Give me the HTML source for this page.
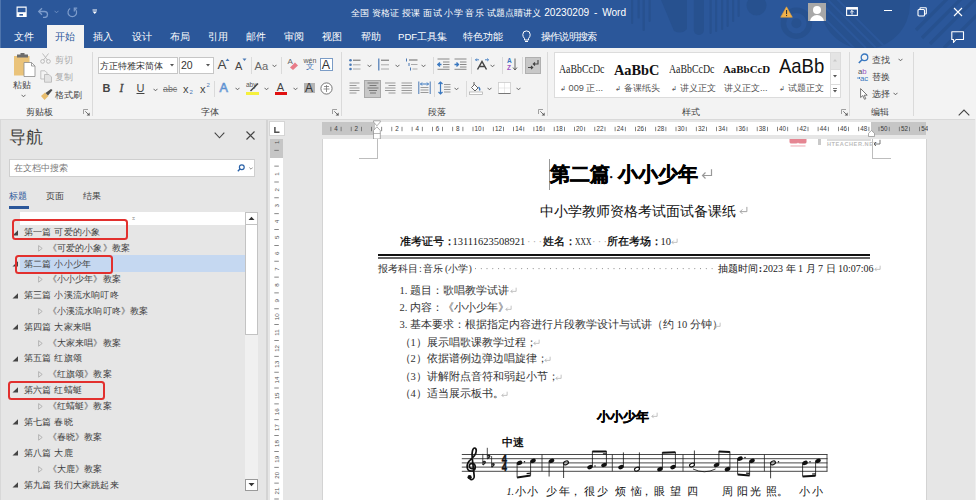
<!DOCTYPE html>
<html><head><meta charset="utf-8">
<style>
*{margin:0;padding:0;box-sizing:border-box}
html,body{width:976px;height:500px;overflow:hidden;background:#e6e6e6;font-family:"Liberation Sans",sans-serif;color:#444}
.a{position:absolute;white-space:nowrap}
#title{left:0;top:0;width:976px;height:48px;background:#2b579a;overflow:hidden}
#ribbon{left:0;top:48px;width:976px;height:72px;background:#f3f3f3;border-bottom:1px solid #d9d9d9}
#nav{left:0;top:120px;width:267px;height:380px;background:#e6e6e6;border-right:1px solid #d4d4d4}
.tab{top:30.5px;font-size:9.6px;line-height:12px;color:#fff}
.rl{font-size:10px;line-height:12px;color:#444}
.sep{position:absolute;width:1px;background:#dadada}
.ser{font-family:"Liberation Serif",serif;color:#000}
</style></head><body>
<div id="title" class="a">
<svg class="a" style="left:0;top:0" width="976" height="48">
 <defs><clipPath id="bc"><circle cx="865" cy="4" r="45"/></clipPath></defs>
 <g fill="#27518f">
  <rect x="631" y="-5" width="2.2" height="29" rx="1.1"/>
  <rect x="637.5" y="-5" width="2.2" height="23.5" rx="1.1"/>
  <rect x="642.5" y="-5" width="2.4" height="36" rx="1.2"/>
  <rect x="648.5" y="-5" width="2.2" height="27" rx="1.1"/>
  <path d="M661 0 H687 V29 Q682 35 674 31 Z"/>
  <rect x="693.8" y="-5" width="10.2" height="40" rx="5"/>
  <rect x="709.5" y="-5" width="2.2" height="39" rx="1.1"/>
  <rect x="715" y="-5" width="2.2" height="37" rx="1.1"/>
  <rect x="721" y="-5" width="2.2" height="35" rx="1.1"/>
  <rect x="726.5" y="-5" width="2.2" height="32" rx="1.1"/>
  <rect x="732" y="-5" width="2.2" height="27" rx="1.1"/>
  <rect x="737.5" y="-5" width="2.2" height="22" rx="1.1"/>
  <circle cx="756.5" cy="5.5" r="10"/>
  <circle cx="796.4" cy="23.2" r="5"/>
  <circle cx="865" cy="4" r="45"/>
 </g>
 <circle cx="796.4" cy="23.2" r="13" fill="none" stroke="#27518f" stroke-width="5.5"/>
 <g clip-path="url(#bc)" stroke="#2b579a" stroke-width="2">
  <path d="M820 2 L866 48 M828 0 L876 48 M836 -2 L886 48 M812 6 L854 48"/>
 </g>
 <g stroke="#27518f" stroke-width="3.2">
  <path d="M916 30 L976 -30 M922 38 L986 -26 M930 44 L990 -16 M944 48 L1000 -8"/>
 </g>
</svg>
<!-- save -->
<svg class="a" style="left:16px;top:6px" width="12" height="12" viewBox="0 0 12 12">
 <path d="M1.1 1.1 H10.1 V10.4 H1.1 Z" fill="none" stroke="#fff" stroke-width="1.1"/>
 <rect x="1.1" y="6.2" width="9" height="4.6" fill="#fff"/>
 <rect x="3.4" y="8" width="3.6" height="1.6" fill="#2b579a"/>
</svg>
<!-- undo -->
<svg class="a" style="left:37px;top:7px" width="13" height="11" viewBox="0 0 13 11">
 <path d="M2 4.5 H7.5 A3 3 0 0 1 7.5 10.5 H6" fill="none" stroke="#7d9ccb" stroke-width="1.3"/>
 <path d="M5 1.2 L1.7 4.5 L5 7.8" fill="none" stroke="#7d9ccb" stroke-width="1.3"/>
</svg>
<svg class="a" style="left:54px;top:10px" width="5" height="4"><path d="M0.5 0.8 L2.5 2.8 L4.5 0.8" fill="none" stroke="#7d9ccb" stroke-width="0.8"/></svg>
<!-- redo -->
<svg class="a" style="left:66px;top:6px" width="13" height="13" viewBox="0 0 13 13">
 <path d="M4.15 2.6 A4.3 4.3 0 1 0 8.45 2.6" fill="none" stroke="#7d9ccb" stroke-width="1.2"/>
 <path d="M8.3 5.4 V2.1 H11.2" fill="none" stroke="#7d9ccb" stroke-width="1.2"/>
</svg>
<!-- customize -->
<svg class="a" style="left:92px;top:9px" width="6" height="6" viewBox="0 0 6 6">
 <rect x="0.5" y="0.5" width="4.5" height="1" fill="#fff"/>
 <path d="M0.5 2.5 H5 L2.75 5 Z" fill="#fff"/>
</svg>
<div class="a" style="left:351px;top:7px;font-size:9.3px;line-height:12px;color:#fff;letter-spacing:0.16px">全国 资格证 授课 面试 小学 音乐 试题点睛讲义 <span style="font-size:10.1px;letter-spacing:0;word-spacing:2px">20230209 - Word</span></div>
<!-- warning -->
<svg class="a" style="left:780px;top:6px" width="13" height="12" viewBox="0 0 13 12">
 <path d="M6.5 0.8 L12.3 11.2 H0.7 Z" fill="#f0b14a" stroke="#e8a43c" stroke-width="0.6" stroke-linejoin="round"/>
 <rect x="6" y="4" width="1.1" height="4" fill="#333"/><rect x="6" y="8.9" width="1.1" height="1.2" fill="#333"/>
</svg>
<!-- avatar -->
<div class="a" style="left:808px;top:3px;width:18px;height:18px;background:#a8a8a8;overflow:hidden">
 <div class="a" style="left:5px;top:3px;width:8px;height:8px;border-radius:50%;background:#fff"></div>
 <div class="a" style="left:2px;top:11.5px;width:14px;height:10px;border-radius:7px 7px 0 0;background:#fff"></div>
</div>
<!-- ribbon display -->
<svg class="a" style="left:846px;top:7px" width="12" height="9" viewBox="0 0 12 9">
 <rect x="0.6" y="0.6" width="10.8" height="7.8" fill="none" stroke="#fff" stroke-width="1.1"/>
 <rect x="0.6" y="0.6" width="10.8" height="2" fill="#fff"/>
 <path d="M6 3.5 V7.5 M4.2 5.3 L6 3.5 L7.8 5.3" fill="none" stroke="#fff" stroke-width="1"/>
</svg>
<div class="a" style="left:884px;top:10px;width:8px;height:1px;background:#fff"></div>
<svg class="a" style="left:917px;top:7px" width="11" height="10" viewBox="0 0 11 10">
 <rect x="1" y="2.5" width="6.5" height="6.5" rx="1" fill="none" stroke="#fff" stroke-width="1.1"/>
 <path d="M3 2.5 V1.5 Q3 0.8 3.8 0.8 H8.5 Q9.3 0.8 9.3 1.6 V6.3 Q9.3 7 8.5 7 H7.5" fill="none" stroke="#fff" stroke-width="1.1"/>
</svg>
<svg class="a" style="left:953px;top:7px" width="10" height="10" viewBox="0 0 10 10">
 <path d="M1 1 L9 9 M9 1 L1 9" stroke="#fff" stroke-width="1.1"/>
</svg>
<svg class="a" style="left:951px;top:31px" width="14" height="13" viewBox="0 0 14 13">
 <path d="M0.8 0.8 H12.5 V8.5 H5 L2.5 11.5 V8.5 H0.8 Z" fill="none" stroke="#fff" stroke-width="1.1" stroke-linejoin="round"/>
</svg>
</div>
<div class="a" style="left:47px;top:25px;width:37px;height:23px;background:#f3f3f3"></div>
<div class="a tab" style="left:14px">文件</div>
<div class="a tab" style="left:55px;color:#2b579a">开始</div>
<div class="a tab" style="left:93px">插入</div>
<div class="a tab" style="left:132px">设计</div>
<div class="a tab" style="left:170px">布局</div>
<div class="a tab" style="left:208px">引用</div>
<div class="a tab" style="left:246px">邮件</div>
<div class="a tab" style="left:284px">审阅</div>
<div class="a tab" style="left:322px">视图</div>
<div class="a tab" style="left:361px">帮助</div>
<div class="a tab" style="left:398px">PDF工具集</div>
<div class="a tab" style="left:463px">特色功能</div>
<svg class="a" style="left:522px;top:30px" width="9" height="13" viewBox="0 0 9 13">
 <path d="M2.5 8.5 Q0.8 6.8 0.8 4.6 A3.7 3.7 0 0 1 8.2 4.6 Q8.2 6.8 6.5 8.5 V10 H2.5 Z" fill="none" stroke="#fff" stroke-width="1"/>
 <path d="M3 11.5 H6" stroke="#fff" stroke-width="1"/>
</svg>
<div class="a tab" style="left:541px;letter-spacing:-0.8px">操作说明搜索</div>
<div class="a" style="left:0;top:0;width:1px;height:48px;background:#4f75ad"></div>
<div id="ribbon" class="a"></div>
<!-- clipboard -->
<svg class="a" style="left:12px;top:53px" width="25" height="25" viewBox="0 0 25 25">
 <rect x="2" y="3" width="15.5" height="19.5" fill="#eac37a"/>
 <rect x="5" y="1.5" width="11" height="3" fill="#6d6d6d"/>
 <rect x="8.5" y="0" width="4" height="3" fill="#6d6d6d"/>
 <path d="M12 9.5 H19.5 L23 13 V23.5 H12 Z" fill="#fff" stroke="#8a8a8a" stroke-width="0.8"/>
 <path d="M19.5 9.5 V13 H23" fill="none" stroke="#8a8a8a" stroke-width="0.8"/>
</svg>
<div class="a rl" style="left:12.5px;top:78.5px;font-size:9.3px">粘贴</div>
<svg class="a" style="left:21px;top:94px" width="5" height="4"><path d="M0.5 0.8 L2.5 2.8 L4.5 0.8" fill="none" stroke="#555" stroke-width="0.9"/></svg>
<svg class="a" style="left:40px;top:53px" width="11" height="11" viewBox="0 0 11 11">
 <path d="M2.5 0.5 L7.5 7 M8.5 0.5 L3.5 7" stroke="#b5b5b5" stroke-width="0.9" fill="none"/>
 <circle cx="2.6" cy="8.4" r="1.9" fill="none" stroke="#b5b5b5" stroke-width="0.9"/>
 <circle cx="8.4" cy="8.4" r="1.9" fill="none" stroke="#b5b5b5" stroke-width="0.9"/>
</svg>
<div class="a rl" style="left:54.5px;top:53.5px;color:#aaa;font-size:9.2px">剪切</div>
<svg class="a" style="left:40px;top:70px" width="13" height="13" viewBox="0 0 13 13">
 <path d="M0.8 0.8 H5 L7 2.8 V9 H0.8 Z" fill="#f3f3f3" stroke="#b5b5b5" stroke-width="0.8"/>
 <path d="M4.5 4.5 H9 L11.5 7 V12.2 H4.5 Z" fill="#e3e3e3" stroke="#b5b5b5" stroke-width="0.8"/>
</svg>
<div class="a rl" style="left:54.5px;top:71px;color:#aaa;font-size:9.2px">复制</div>
<svg class="a" style="left:40px;top:89px" width="13" height="12" viewBox="0 0 13 12">
 <path d="M1 7 L5 3.5 L8.5 7 L4.5 11 Z" fill="#e8bd6d"/>
 <path d="M5.5 4 L8 6.5 L12.5 1 L11 0 Z" fill="#4d4d4d"/>
</svg>
<div class="a rl" style="left:54.5px;top:89px;font-size:9.2px">格式刷</div>
<div class="a rl" style="left:26px;top:105.5px;font-size:9.2px">剪贴板</div>
<svg class="a" style="left:83px;top:109px" width="7" height="7" viewBox="0 0 7 7"><path d="M0.5 5 V0.5 H5" fill="none" stroke="#8a8a8a" stroke-width="0.8"/><path d="M2.3 2.3 L6.3 6.3" stroke="#666" stroke-width="0.9"/><path d="M6.6 3.6 V6.6 H3.6 Z" fill="#555"/></svg>
<div class="sep" style="left:92px;top:52px;height:64px"></div>

<!-- font -->
<div class="a" style="left:98px;top:56.5px;width:79.5px;height:17.5px;background:#fff;border:1px solid #c6c6c6"></div>
<div class="a rl" style="left:100px;top:59.5px;font-size:9.2px;color:#333">方正特雅宋简体</div>
<svg class="a" style="left:169.5px;top:64px" width="5" height="3"><path d="M0 0 H4 L2 2.5 Z" fill="#555"/></svg>
<div class="a" style="left:179px;top:56.5px;width:35px;height:17.5px;background:#fff;border:1px solid #c6c6c6"></div>
<div class="a rl" style="left:181px;top:58.5px;font-size:10.5px;color:#333">20</div>
<svg class="a" style="left:205.5px;top:64px" width="5" height="3"><path d="M0 0 H4 L2 2.5 Z" fill="#555"/></svg>
<div class="a" style="left:217.5px;top:57.2px;font-size:13.5px;line-height:16px;color:#444">A</div>
<svg class="a" style="left:225px;top:58px" width="5" height="4"><path d="M0.5 3 L2.5 0.5 L4.5 3 Z" fill="#4a79b5"/></svg>
<div class="a" style="left:235px;top:60.2px;font-size:11px;line-height:13px;color:#444">A</div>
<svg class="a" style="left:241.5px;top:58px" width="5" height="4"><path d="M0.5 0.5 L2.5 3 L4.5 0.5 Z" fill="#4a79b5"/></svg>
<div class="sep" style="left:250.5px;top:57px;height:17px"></div>
<div class="a" style="left:254.5px;top:59.2px;font-size:11.2px;line-height:14px;color:#666">Aa</div>
<svg class="a" style="left:271.5px;top:64px" width="5" height="4"><path d="M0.5 0.8 L2.5 2.8 L4.5 0.8" fill="none" stroke="#555" stroke-width="0.9"/></svg>
<div class="sep" style="left:281px;top:57px;height:17px"></div>
<div class="a" style="left:287.5px;top:57px;font-size:8px;line-height:9px;color:#666">A</div>
<svg class="a" style="left:289px;top:61px" width="10" height="9" viewBox="0 0 10 9"><path d="M1 6.5 L6 1.5 L9 4.5 L4 9 Z" fill="#e87b88"/></svg>
<div class="a" style="left:303.5px;top:57px;font-size:7px;line-height:8px;color:#555">wén</div>
<div class="a" style="left:305.5px;top:63px;font-size:8px;line-height:8px;color:#4a79b5">文</div>
<div class="a" style="left:320px;top:58px;width:13px;height:13px;border:1px solid #7b9cc6;background:#fff"></div>
<div class="a" style="left:321.8px;top:57.5px;font-size:12.5px;line-height:14px;color:#333">A</div>
<div class="sep" style="left:340.5px;top:52px;height:64px"></div>
<!-- row2 -->
<div class="a" style="left:102.5px;top:82px;font-size:11px;line-height:13px;font-weight:bold;color:#444">B</div>
<div class="a" style="left:119.5px;top:82px;font-size:11.5px;line-height:13px;font-style:italic;color:#444;font-family:'Liberation Serif',serif;-webkit-text-stroke:0.3px #444">I</div>
<div class="a" style="left:136.5px;top:82px;font-size:11px;line-height:13px;color:#444;text-decoration:underline">U</div>
<svg class="a" style="left:152.5px;top:88px" width="5" height="4"><path d="M0.5 0.8 L2.5 2.8 L4.5 0.8" fill="none" stroke="#555" stroke-width="0.9"/></svg>
<div class="a" style="left:163px;top:83.5px;font-size:8.8px;line-height:11px;color:#777;text-decoration:line-through">abc</div>
<div class="a" style="left:183px;top:82.5px;font-size:11px;line-height:13px;color:#444">x</div>
<div class="a" style="left:189.5px;top:89px;font-size:6px;line-height:6px;color:#4a79b5">2</div>
<div class="a" style="left:200px;top:82.5px;font-size:11px;line-height:13px;color:#444">x</div>
<div class="a" style="left:206.5px;top:82px;font-size:6px;line-height:6px;color:#4a79b5">2</div>
<div class="sep" style="left:214px;top:81px;height:16px"></div>
<div class="a" style="left:219.5px;top:80.5px;font-size:12.5px;line-height:14px;color:#eef4fb;-webkit-text-stroke:0.7px #5a8fd0">A</div>
<svg class="a" style="left:234.5px;top:87px" width="5" height="4"><path d="M0.5 0.8 L2.5 2.8 L4.5 0.8" fill="none" stroke="#555" stroke-width="0.9"/></svg>
<div class="a" style="left:246px;top:81px;font-size:6.5px;line-height:7px;color:#555">aby</div>
<svg class="a" style="left:248px;top:82px" width="11" height="10" viewBox="0 0 11 10"><path d="M2 8.5 L9.5 1 L10.5 2 L3 9.5 Z" fill="#444"/></svg>
<div class="a" style="left:246px;top:91.5px;width:12.5px;height:3px;background:#f5f03c"></div>
<svg class="a" style="left:264px;top:87px" width="5" height="4"><path d="M0.5 0.8 L2.5 2.8 L4.5 0.8" fill="none" stroke="#555" stroke-width="0.9"/></svg>
<div class="a" style="left:276.8px;top:80.5px;font-size:11px;line-height:13px;color:#444">A</div>
<div class="a" style="left:274.5px;top:91.5px;width:12.5px;height:3px;background:#e01010"></div>
<svg class="a" style="left:292.5px;top:87px" width="5" height="4"><path d="M0.5 0.8 L2.5 2.8 L4.5 0.8" fill="none" stroke="#555" stroke-width="0.9"/></svg>
<div class="a" style="left:304px;top:83px;width:10.5px;height:10px;background:#b4b4b4"></div>
<div class="a" style="left:305px;top:81.5px;font-size:12px;line-height:13px;color:#333">A</div>
<svg class="a" style="left:320px;top:82px" width="13" height="13" viewBox="0 0 13 13"><circle cx="6.5" cy="6.5" r="5.6" fill="#fff" stroke="#666" stroke-width="0.9"/><path d="M4 4.5 H9 M6.5 3 V10 M3.5 7 H9.5" stroke="#777" stroke-width="0.8" fill="none"/></svg>
<div class="a rl" style="left:201px;top:105.5px;font-size:9.2px">字体</div>
<svg class="a" style="left:332px;top:109px" width="7" height="7" viewBox="0 0 7 7"><path d="M0.5 5 V0.5 H5" fill="none" stroke="#8a8a8a" stroke-width="0.8"/><path d="M2.3 2.3 L6.3 6.3" stroke="#666" stroke-width="0.9"/><path d="M6.6 3.6 V6.6 H3.6 Z" fill="#555"/></svg>

<!-- paragraph -->
<svg class="a" style="left:348px;top:58px" width="14" height="13" viewBox="0 0 14 13">
 <circle cx="2.5" cy="2.2" r="1.3" fill="#4a79b5"/><circle cx="2.5" cy="6.8" r="1.3" fill="#4a79b5"/><circle cx="2.5" cy="11" r="1.3" fill="#4a79b5"/>
 <path d="M5 2.2 H12.5" stroke="#666" stroke-width="1"/><path d="M5 6.8 H12.5 M5 11 H12.5" stroke="#aaa" stroke-width="1"/>
</svg>
<svg class="a" style="left:366.5px;top:64px" width="5" height="4"><path d="M0.5 0.8 L2.5 2.8 L4.5 0.8" fill="none" stroke="#555" stroke-width="0.9"/></svg>
<svg class="a" style="left:377px;top:58px" width="14" height="13" viewBox="0 0 14 13">
 <path d="M1.8 0.5 V12.5" stroke="#4a79b5" stroke-width="1.2"/>
 <path d="M4 2.2 H12" stroke="#666" stroke-width="1"/><path d="M4 6.8 H12 M4 11 H12" stroke="#aaa" stroke-width="1"/>
</svg>
<svg class="a" style="left:394.5px;top:64px" width="5" height="4"><path d="M0.5 0.8 L2.5 2.8 L4.5 0.8" fill="none" stroke="#555" stroke-width="0.9"/></svg>
<svg class="a" style="left:405px;top:58px" width="14" height="13" viewBox="0 0 14 13">
 <path d="M1.5 0.5 V3.5 M4 5 V8 M5.5 9.5 V12.5" stroke="#4a79b5" stroke-width="1"/>
 <path d="M4 2 H12.5" stroke="#666" stroke-width="1"/><path d="M6 6.5 H12.5 M7.5 11 H12.5" stroke="#aaa" stroke-width="1"/>
</svg>
<svg class="a" style="left:421px;top:64px" width="5" height="4"><path d="M0.5 0.8 L2.5 2.8 L4.5 0.8" fill="none" stroke="#555" stroke-width="0.9"/></svg>
<div class="sep" style="left:432.5px;top:57px;height:17px"></div>
<svg class="a" style="left:436.5px;top:58px" width="13" height="12" viewBox="0 0 13 12">
 <path d="M0.5 1 H12.5 M6 4 H12.5 M6 6.5 H12.5 M6 9 H12.5 M0.5 11.3 H12.5" stroke="#888" stroke-width="1"/>
 <path d="M4.5 6.5 H0.8 M3 4.5 L0.8 6.5 L3 8.5" stroke="#3a78c0" stroke-width="1.3" fill="none"/>
</svg>
<svg class="a" style="left:453.5px;top:58px" width="13" height="12" viewBox="0 0 13 12">
 <path d="M0.5 1 H12.5 M6 4 H12.5 M6 6.5 H12.5 M6 9 H12.5 M0.5 11.3 H12.5" stroke="#888" stroke-width="1"/>
 <path d="M0.5 6.5 H4.5 M2.5 4.5 L4.5 6.5 L2.5 8.5" stroke="#3a78c0" stroke-width="1.3" fill="none"/>
</svg>
<div class="sep" style="left:470.5px;top:57px;height:17px"></div>
<svg class="a" style="left:474.5px;top:58px" width="14" height="12" viewBox="0 0 14 12">
 <path d="M2.5 11.5 L7 3.5 L11.5 11.5 M4.2 8.5 H9.8" stroke="#444" stroke-width="1.5" fill="none"/>
 <path d="M0.5 1.8 H4 M1.8 0.5 L0.5 1.8 L1.8 3.1 M13.5 1.8 H10 M12.2 0.5 L13.5 1.8 L12.2 3.1" stroke="#3a78c0" stroke-width="0.9" fill="none"/>
</svg>
<svg class="a" style="left:490px;top:64px" width="5" height="4"><path d="M0.5 0.8 L2.5 2.8 L4.5 0.8" fill="none" stroke="#555" stroke-width="0.9"/></svg>
<div class="sep" style="left:501.5px;top:57px;height:17px"></div>
<div class="a" style="left:507px;top:57px;font-size:6.5px;line-height:7px;color:#3a78c0;font-weight:bold">A</div>
<div class="a" style="left:507px;top:63.5px;font-size:6.5px;line-height:7px;color:#9b4fc2;font-weight:bold">Z</div>
<svg class="a" style="left:512px;top:58px" width="6" height="13" viewBox="0 0 6 13"><path d="M3 0.5 V12 M1 9.5 L3 12 L5 9.5" stroke="#555" stroke-width="0.9" fill="none"/></svg>
<div class="sep" style="left:522.3px;top:57px;height:17px"></div>
<div class="a" style="left:524.5px;top:57px;width:16.5px;height:17px;background:#c8c8c8;border:1px solid #b0b0b0"></div>
<svg class="a" style="left:526.5px;top:59px" width="13" height="13" viewBox="0 0 13 13">
 <path d="M11 1 V5 H6.5 M8 3.5 L6.3 5 L8 6.5" stroke="#444" stroke-width="1.1" fill="none"/>
 <path d="M1 8.5 H5.5 M4 7 L5.7 8.5 L4 10" stroke="#444" stroke-width="1.1" fill="none"/>
</svg>
<!-- row2 para -->
<svg class="a" style="left:349px;top:82px" width="12" height="12" viewBox="0 0 12 12">
 <path d="M0.5 1 H10.5 M0.5 3.5 H7.5 M0.5 6 H10.5 M0.5 8.5 H10.5 M0.5 11 H7.5" stroke="#999" stroke-width="1"/>
</svg>
<div class="a" style="left:364px;top:80px;width:16.5px;height:17.5px;background:#c8c8c8;border:1px solid #a9a9a9"></div>
<svg class="a" style="left:366.5px;top:82px" width="12" height="12" viewBox="0 0 12 12">
 <path d="M0.5 1 H11.5 M2.5 3.5 H9.5 M0.5 6 H11.5 M2 8.5 H10 M3 11 H9" stroke="#777" stroke-width="1"/>
</svg>
<svg class="a" style="left:383.5px;top:82px" width="12" height="12" viewBox="0 0 12 12">
 <path d="M1 1 H11.5 M4.5 3.5 H11.5 M1 6 H11.5 M1 8.5 H11.5 M4.5 11 H11.5" stroke="#999" stroke-width="1"/>
</svg>
<svg class="a" style="left:401px;top:82px" width="12" height="12" viewBox="0 0 12 12">
 <path d="M0.5 1 H11 M0.5 3.5 H11 M0.5 6 H11 M0.5 8.5 H11 M0.5 11 H11" stroke="#999" stroke-width="1"/>
</svg>
<svg class="a" style="left:417.5px;top:81px" width="13" height="14" viewBox="0 0 13 14">
 <path d="M0.8 0.5 V13 M12.2 0.5 V13" stroke="#4a79b5" stroke-width="1"/>
 <path d="M2.5 3 H10.5 M4 1.5 L2.5 3 L4 4.5 M9 1.5 L10.5 3 L9 4.5" stroke="#3a78c0" stroke-width="1" fill="none"/>
 <path d="M2.5 6.5 H10.5 M2.5 9 H10.5 M2.5 11.5 H10.5" stroke="#999" stroke-width="1"/>
</svg>
<div class="sep" style="left:434px;top:81px;height:16px"></div>
<svg class="a" style="left:438px;top:81px" width="13" height="14" viewBox="0 0 13 14">
 <path d="M2.5 1 V13 M0.5 3 L2.5 1 L4.5 3 M0.5 11 L2.5 13 L4.5 11" stroke="#3a78c0" stroke-width="1.2" fill="none"/>
 <path d="M6 3.5 H12.5 M6 6 H12.5 M6 8.5 H12.5 M6 11 H12.5" stroke="#999" stroke-width="1"/>
</svg>
<svg class="a" style="left:454px;top:87px" width="5" height="4"><path d="M0.5 0.8 L2.5 2.8 L4.5 0.8" fill="none" stroke="#555" stroke-width="0.9"/></svg>
<div class="sep" style="left:465.5px;top:81px;height:16px"></div>
<svg class="a" style="left:469px;top:81px" width="14" height="14" viewBox="0 0 14 14">
 <path d="M5 1 V4 M2.5 6.5 L5.5 3.5 L9 7 L6 10 Z" stroke="#555" stroke-width="0.9" fill="#fff"/>
 <path d="M9.5 6 Q11.5 8 10.5 9.5" stroke="#3a78c0" stroke-width="1.3" fill="none"/>
 <rect x="0.5" y="11" width="13" height="2.5" fill="#fff" stroke="#aaa" stroke-width="0.7"/>
</svg>
<svg class="a" style="left:487px;top:87px" width="5" height="4"><path d="M0.5 0.8 L2.5 2.8 L4.5 0.8" fill="none" stroke="#555" stroke-width="0.9"/></svg>
<svg class="a" style="left:497.5px;top:82px" width="13" height="12" viewBox="0 0 13 12">
 <rect x="0.5" y="0.5" width="12" height="11" fill="#fff" stroke="#ccc" stroke-width="0.8"/>
 <path d="M6.5 0.5 V11.5 M0.5 6 H12.5" stroke="#ccc" stroke-width="0.8" stroke-dasharray="1 1"/>
 <path d="M0.5 11.5 H12.5" stroke="#777" stroke-width="1"/>
</svg>
<svg class="a" style="left:515.5px;top:87px" width="5" height="4"><path d="M0.5 0.8 L2.5 2.8 L4.5 0.8" fill="none" stroke="#555" stroke-width="0.9"/></svg>
<div class="a rl" style="left:428px;top:105.5px;font-size:9.2px">段落</div>
<svg class="a" style="left:538px;top:109px" width="7" height="7" viewBox="0 0 7 7"><path d="M0.5 5 V0.5 H5" fill="none" stroke="#8a8a8a" stroke-width="0.8"/><path d="M2.3 2.3 L6.3 6.3" stroke="#666" stroke-width="0.9"/><path d="M6.6 3.6 V6.6 H3.6 Z" fill="#555"/></svg>
<div class="sep" style="left:546.5px;top:52px;height:64px"></div>

<!-- styles -->
<div class="a" style="left:553.5px;top:52.3px;width:287.5px;height:46px;background:#fff;border:1px solid #dcdcdc"></div>
<div class="a" style="left:559px;top:62px;width:46px;overflow:hidden;font-family:'Liberation Serif',serif;font-size:12px;line-height:14px;color:#222"><span style="display:inline-block;transform:scaleX(0.82);transform-origin:0 0">AaBbCcDc</span></div>
<div class="a" style="left:560px;top:81.5px;font-size:9.2px;line-height:12px;color:#555"><span style="font-size:7px">↲</span> 009 正...</div>
<div class="a" style="left:614px;top:61.5px;font-family:'Liberation Serif',serif;font-size:14.3px;line-height:17px;font-weight:bold;color:#111">AaBbC</div>
<div class="a" style="left:615px;top:81.5px;font-size:9.2px;line-height:12px;color:#555"><span style="font-size:7px">↲</span> 备课纸头</div>
<div class="a" style="left:668.5px;top:62px;width:46px;overflow:hidden;font-family:'Liberation Serif',serif;font-size:12px;line-height:14px;color:#222"><span style="display:inline-block;transform:scaleX(0.82);transform-origin:0 0">AaBbCcDc</span></div>
<div class="a" style="left:671px;top:81.5px;font-size:9.2px;line-height:12px;color:#555"><span style="font-size:7px">↲</span> 讲义正文</div>
<div class="a" style="left:723px;top:63.2px;font-family:'Liberation Serif',serif;font-size:10.9px;line-height:13px;font-weight:bold;color:#111">AaBbCcD</div>
<div class="a" style="left:724px;top:81.5px;font-size:9.2px;line-height:12px;color:#555">讲义正文...</div>
<div class="a" style="left:778.5px;top:54.3px;font-size:21px;line-height:24px;color:#111;transform:scaleX(0.88);transform-origin:0 0">AaBb</div>
<div class="a" style="left:779px;top:81.5px;font-size:9.2px;line-height:12px;color:#555"><span style="font-size:7px">↲</span> 试题正文</div>
<div class="a" style="left:829.5px;top:52.3px;width:11.5px;height:46px;background:#fff;border:1px solid #dcdcdc"></div>
<div class="a" style="left:830.5px;top:53.3px;width:9.5px;height:15.5px;background:#e4e4e4"></div>
<div class="a" style="left:829.5px;top:68.5px;width:11.5px;height:1px;background:#dcdcdc"></div>
<div class="a" style="left:829.5px;top:83.5px;width:11.5px;height:1px;background:#dcdcdc"></div>
<svg class="a" style="left:833px;top:59px" width="5" height="3"><path d="M0 2.5 H4 L2 0 Z" fill="#c8c8c8"/></svg>
<svg class="a" style="left:833px;top:75px" width="5" height="3"><path d="M0 0 H4 L2 2.5 Z" fill="#555"/></svg>
<svg class="a" style="left:833px;top:88px" width="5" height="5"><path d="M0 0.5 H4" stroke="#555" stroke-width="0.8"/><path d="M0 2 H4 L2 4.5 Z" fill="#555"/></svg>
<div class="a rl" style="left:682px;top:105.5px;font-size:9.2px">样式</div>
<svg class="a" style="left:840.5px;top:109px" width="7" height="7" viewBox="0 0 7 7"><path d="M0.5 5 V0.5 H5" fill="none" stroke="#8a8a8a" stroke-width="0.8"/><path d="M2.3 2.3 L6.3 6.3" stroke="#666" stroke-width="0.9"/><path d="M6.6 3.6 V6.6 H3.6 Z" fill="#555"/></svg>
<div class="sep" style="left:848.5px;top:52px;height:64px"></div>

<!-- editing -->
<svg class="a" style="left:858px;top:53px" width="11" height="11" viewBox="0 0 11 11">
 <circle cx="6.5" cy="4.3" r="3.3" fill="none" stroke="#3a78c0" stroke-width="1.3"/>
 <path d="M4 6.8 L0.8 10" stroke="#3a78c0" stroke-width="1.6"/>
</svg>
<div class="a rl" style="left:871.5px;top:53.5px;font-size:9.2px">查找</div>
<svg class="a" style="left:898px;top:58px" width="5" height="4"><path d="M0.5 0.8 L2.5 2.8 L4.5 0.8" fill="none" stroke="#555" stroke-width="0.9"/></svg>
<div class="a" style="left:858px;top:68px;font-size:7.8px;line-height:7px;color:#555">a<span style="color:#9b4fc2">b</span></div>
<div class="a" style="left:860px;top:74.5px;font-size:7.8px;line-height:7px;color:#3a78c0">ac</div>
<svg class="a" style="left:857px;top:76px" width="4" height="4"><path d="M0 2 H3 M2 1 L3 2 L2 3" stroke="#3a78c0" stroke-width="0.8" fill="none"/></svg>
<div class="a rl" style="left:871.5px;top:71px;font-size:9.2px">替换</div>
<svg class="a" style="left:859.5px;top:87.5px" width="8" height="12" viewBox="0 0 8 12">
 <path d="M0.6 0.6 V9.5 L2.8 7.6 L4.5 11.3 L5.8 10.7 L4.2 7.2 H7.2 Z" fill="#fff" stroke="#555" stroke-width="0.8" stroke-linejoin="round"/>
</svg>
<div class="a rl" style="left:871.5px;top:88px;font-size:9.2px">选择</div>
<svg class="a" style="left:893px;top:92px" width="5" height="4"><path d="M0.5 0.8 L2.5 2.8 L4.5 0.8" fill="none" stroke="#555" stroke-width="0.9"/></svg>
<div class="a rl" style="left:871px;top:105.5px;font-size:9.2px">编辑</div>
<div class="sep" style="left:912.5px;top:52px;height:64px"></div>
<svg class="a" style="left:958px;top:109px" width="12" height="7" viewBox="0 0 12 7"><path d="M0.7 6.3 L6 1 L11.3 6.3" fill="none" stroke="#444" stroke-width="1.1"/></svg>
<div id="nav" class="a"></div>
<div class="a" style="left:8.5px;top:126.5px;font-size:16.5px;line-height:20px;color:#444">导航</div>
<svg class="a" style="left:214px;top:132px" width="11" height="7" viewBox="0 0 11 7"><path d="M0.7 0.7 L5.5 5.8 L10.3 0.7" fill="none" stroke="#444" stroke-width="1.1"/></svg>
<svg class="a" style="left:246px;top:131px" width="9" height="9" viewBox="0 0 9 9"><path d="M0.5 0.5 L8.5 8.5 M8.5 0.5 L0.5 8.5" stroke="#444" stroke-width="1.1"/></svg>
<div class="a" style="left:9px;top:158.5px;width:246px;height:18px;background:#fff;border:1px solid #cfcfcf"></div>
<div class="a" style="left:13.5px;top:161.5px;font-size:9.2px;line-height:12px;color:#7a7a7a">在文档中搜索</div>
<svg class="a" style="left:236.5px;top:163.5px" width="8" height="8" viewBox="0 0 8 8"><circle cx="4.8" cy="3.2" r="2.4" fill="none" stroke="#2b62a8" stroke-width="1.2"/><path d="M3 5 L0.8 7.2" stroke="#2b62a8" stroke-width="1.4"/></svg>
<svg class="a" style="left:249px;top:167px" width="4" height="3"><path d="M0.3 0.5 L2 2.2 L3.7 0.5" fill="none" stroke="#666" stroke-width="0.7"/></svg>
<div class="a" style="left:9px;top:189.5px;font-size:9.2px;line-height:12px;color:#2b579a">标题</div>
<div class="a" style="left:45.5px;top:189.5px;font-size:9.2px;line-height:12px;color:#444">页面</div>
<div class="a" style="left:82.5px;top:189.5px;font-size:9.2px;line-height:12px;color:#444">结果</div>
<div class="a" style="left:9px;top:206px;width:19.5px;height:2.5px;background:#2b579a"></div>
<div class="a" style="left:20px;top:212px;width:225px;height:12.5px;background:#fff"></div>
<div class="a" style="left:131px;top:215px;font-size:6px;line-height:6px;color:#777">⌅</div>
<div class="a" style="left:245px;top:212px;width:13px;height:12.5px;background:#fff;border:1px solid #c3c3c3"></div>
<svg class="a" style="left:248px;top:216px" width="7" height="5"><path d="M0.5 4 H6.5 L3.5 0.8 Z" fill="#333"/></svg>
<div class="a" style="left:245px;top:224px;width:13px;height:111px;background:#fff;border:1px solid #c3c3c3"></div>
<div class="a" style="left:245px;top:335px;width:13px;height:143.5px;background:#f0f0f0"></div>
<div class="a" style="left:245px;top:478.5px;width:13px;height:12px;background:#fff;border:1px solid #9a9a9a"></div>
<svg class="a" style="left:248px;top:482px" width="7" height="5"><path d="M0.5 1 H6.5 L3.5 4.2 Z" fill="#333"/></svg>
<div class="a" style="left:20px;top:255px;width:225px;height:17px;background:#c5d8f1"></div>
<svg class="a" style="left:12px;top:229.5px" width="7" height="6"><path d="M6 0.3 V5.6 H0.5 Z" fill="#444"/></svg>
<div class="a" style="left:24px;top:226.1px;font-size:9.2px;line-height:12px;color:#404040;font-weight:500;letter-spacing:0.2px">第一篇 可爱的小象</div>
<svg class="a" style="left:37.5px;top:244.9px" width="5" height="7"><path d="M0.6 0.6 L4.2 3.4 L0.6 6.2 Z" fill="none" stroke="#a0a0a0" stroke-width="0.7"/></svg>
<div class="a" style="left:47.5px;top:241.9px;font-size:9.2px;line-height:12px;color:#404040;font-weight:500;letter-spacing:0.2px">《可爱的小象》教案</div>
<svg class="a" style="left:12px;top:261.1px" width="7" height="6"><path d="M6 0.3 V5.6 H0.5 Z" fill="#444"/></svg>
<div class="a" style="left:24px;top:257.7px;font-size:9.2px;line-height:12px;color:#404040;font-weight:500;letter-spacing:0.2px">第二篇 小小少年</div>
<svg class="a" style="left:37.5px;top:276.4px" width="5" height="7"><path d="M0.6 0.6 L4.2 3.4 L0.6 6.2 Z" fill="none" stroke="#a0a0a0" stroke-width="0.7"/></svg>
<div class="a" style="left:47.5px;top:273.4px;font-size:9.2px;line-height:12px;color:#404040;font-weight:500;letter-spacing:0.2px">《小小少年》教案</div>
<svg class="a" style="left:12px;top:292.6px" width="7" height="6"><path d="M6 0.3 V5.6 H0.5 Z" fill="#444"/></svg>
<div class="a" style="left:24px;top:289.2px;font-size:9.2px;line-height:12px;color:#404040;font-weight:500;letter-spacing:0.2px">第三篇 小溪流水响叮咚</div>
<svg class="a" style="left:37.5px;top:308.0px" width="5" height="7"><path d="M0.6 0.6 L4.2 3.4 L0.6 6.2 Z" fill="none" stroke="#a0a0a0" stroke-width="0.7"/></svg>
<div class="a" style="left:47.5px;top:305.0px;font-size:9.2px;line-height:12px;color:#404040;font-weight:500;letter-spacing:0.2px">《小溪流水响叮咚》教案</div>
<svg class="a" style="left:12px;top:324.2px" width="7" height="6"><path d="M6 0.3 V5.6 H0.5 Z" fill="#444"/></svg>
<div class="a" style="left:24px;top:320.8px;font-size:9.2px;line-height:12px;color:#404040;font-weight:500;letter-spacing:0.2px">第四篇 大家来唱</div>
<svg class="a" style="left:37.5px;top:339.6px" width="5" height="7"><path d="M0.6 0.6 L4.2 3.4 L0.6 6.2 Z" fill="none" stroke="#a0a0a0" stroke-width="0.7"/></svg>
<div class="a" style="left:47.5px;top:336.6px;font-size:9.2px;line-height:12px;color:#404040;font-weight:500;letter-spacing:0.2px">《大家来唱》教案</div>
<svg class="a" style="left:12px;top:355.7px" width="7" height="6"><path d="M6 0.3 V5.6 H0.5 Z" fill="#444"/></svg>
<div class="a" style="left:24px;top:352.3px;font-size:9.2px;line-height:12px;color:#404040;font-weight:500;letter-spacing:0.2px">第五篇 红旗颂</div>
<svg class="a" style="left:37.5px;top:371.1px" width="5" height="7"><path d="M0.6 0.6 L4.2 3.4 L0.6 6.2 Z" fill="none" stroke="#a0a0a0" stroke-width="0.7"/></svg>
<div class="a" style="left:47.5px;top:368.1px;font-size:9.2px;line-height:12px;color:#404040;font-weight:500;letter-spacing:0.2px">《红旗颂》教案</div>
<svg class="a" style="left:12px;top:387.3px" width="7" height="6"><path d="M6 0.3 V5.6 H0.5 Z" fill="#444"/></svg>
<div class="a" style="left:24px;top:383.9px;font-size:9.2px;line-height:12px;color:#404040;font-weight:500;letter-spacing:0.2px">第六篇 红蜻蜓</div>
<svg class="a" style="left:37.5px;top:402.7px" width="5" height="7"><path d="M0.6 0.6 L4.2 3.4 L0.6 6.2 Z" fill="none" stroke="#a0a0a0" stroke-width="0.7"/></svg>
<div class="a" style="left:47.5px;top:399.7px;font-size:9.2px;line-height:12px;color:#404040;font-weight:500;letter-spacing:0.2px">《红蜻蜓》教案</div>
<svg class="a" style="left:12px;top:418.9px" width="7" height="6"><path d="M6 0.3 V5.6 H0.5 Z" fill="#444"/></svg>
<div class="a" style="left:24px;top:415.5px;font-size:9.2px;line-height:12px;color:#404040;font-weight:500;letter-spacing:0.2px">第七篇 春晓</div>
<svg class="a" style="left:37.5px;top:434.2px" width="5" height="7"><path d="M0.6 0.6 L4.2 3.4 L0.6 6.2 Z" fill="none" stroke="#a0a0a0" stroke-width="0.7"/></svg>
<div class="a" style="left:47.5px;top:431.2px;font-size:9.2px;line-height:12px;color:#404040;font-weight:500;letter-spacing:0.2px">《春晓》教案</div>
<svg class="a" style="left:12px;top:450.4px" width="7" height="6"><path d="M6 0.3 V5.6 H0.5 Z" fill="#444"/></svg>
<div class="a" style="left:24px;top:447.0px;font-size:9.2px;line-height:12px;color:#404040;font-weight:500;letter-spacing:0.2px">第八篇 大鹿</div>
<svg class="a" style="left:37.5px;top:465.8px" width="5" height="7"><path d="M0.6 0.6 L4.2 3.4 L0.6 6.2 Z" fill="none" stroke="#a0a0a0" stroke-width="0.7"/></svg>
<div class="a" style="left:47.5px;top:462.8px;font-size:9.2px;line-height:12px;color:#404040;font-weight:500;letter-spacing:0.2px">《大鹿》教案</div>
<svg class="a" style="left:12px;top:482.0px" width="7" height="6"><path d="M6 0.3 V5.6 H0.5 Z" fill="#444"/></svg>
<div class="a" style="left:24px;top:478.6px;font-size:9.2px;line-height:12px;color:#404040;font-weight:500;letter-spacing:0.2px">第九篇 我们大家跳起来</div>
<div class="a" style="left:12.2px;top:219.3px;width:115.5px;height:20.9px;border:2.4px solid #e2302e;border-radius:3.5px"></div>
<div class="a" style="left:14.8px;top:254.5px;width:98.0px;height:19.2px;border:2.4px solid #e2302e;border-radius:3.5px"></div>
<div class="a" style="left:8.0px;top:380.5px;width:96.6px;height:19.6px;border:2.4px solid #e2302e;border-radius:3.5px"></div>
<div class="a" style="left:0;top:119px;width:1px;height:381px;background:#d8d8d8"></div>
<div class="a" style="left:975px;top:119px;width:1px;height:381px;background:#efefef"></div>
<div class="a" style="left:267px;top:120px;width:1px;height:380px;background:#d4d4d4"></div>
<div class="a" style="left:268.5px;top:120.5px;width:16px;height:15.5px;background:#fff;border:1px solid #d5d5d5"></div>
<svg class="a" style="left:273.5px;top:126.5px" width="6" height="7"><path d="M0.9 0 V5.2 H5.5" fill="none" stroke="#505050" stroke-width="1.5"/></svg>
<div class="a" style="left:269.7px;top:139px;width:13.3px;height:361px;background:#fff"></div>
<div class="a" style="left:269.7px;top:139px;width:13.3px;height:19.2px;background:#c6c6c6"></div>
<svg class="a" style="left:269.7px;top:135px" width="14" height="365"><rect x="4.3" y="14.9" width="4.5" height="0.8" fill="#6a6a6a"/><text transform="translate(8.7 7.3) rotate(-90)" font-size="6.2" font-family="Liberation Sans" fill="#555" text-anchor="middle">1</text><rect x="4.3" y="30.7" width="4.5" height="0.8" fill="#6a6a6a"/><rect x="4.3" y="46.6" width="4.5" height="0.8" fill="#6a6a6a"/><text transform="translate(8.7 39.0) rotate(-90)" font-size="6.2" font-family="Liberation Sans" fill="#555" text-anchor="middle">1</text><rect x="4.3" y="62.4" width="4.5" height="0.8" fill="#6a6a6a"/><text transform="translate(8.7 54.9) rotate(-90)" font-size="6.2" font-family="Liberation Sans" fill="#555" text-anchor="middle">2</text><rect x="4.3" y="78.3" width="4.5" height="0.8" fill="#6a6a6a"/><text transform="translate(8.7 70.8) rotate(-90)" font-size="6.2" font-family="Liberation Sans" fill="#555" text-anchor="middle">3</text><rect x="4.3" y="94.1" width="4.5" height="0.8" fill="#6a6a6a"/><text transform="translate(8.7 86.6) rotate(-90)" font-size="6.2" font-family="Liberation Sans" fill="#555" text-anchor="middle">4</text><rect x="4.3" y="110.0" width="4.5" height="0.8" fill="#6a6a6a"/><text transform="translate(8.7 102.4) rotate(-90)" font-size="6.2" font-family="Liberation Sans" fill="#555" text-anchor="middle">5</text><rect x="4.3" y="125.8" width="4.5" height="0.8" fill="#6a6a6a"/><text transform="translate(8.7 118.3) rotate(-90)" font-size="6.2" font-family="Liberation Sans" fill="#555" text-anchor="middle">6</text><rect x="4.3" y="141.7" width="4.5" height="0.8" fill="#6a6a6a"/><text transform="translate(8.7 134.1) rotate(-90)" font-size="6.2" font-family="Liberation Sans" fill="#555" text-anchor="middle">7</text><rect x="4.3" y="157.5" width="4.5" height="0.8" fill="#6a6a6a"/><text transform="translate(8.7 150.0) rotate(-90)" font-size="6.2" font-family="Liberation Sans" fill="#555" text-anchor="middle">8</text><rect x="4.3" y="173.4" width="4.5" height="0.8" fill="#6a6a6a"/><text transform="translate(8.7 165.9) rotate(-90)" font-size="6.2" font-family="Liberation Sans" fill="#555" text-anchor="middle">9</text><rect x="4.3" y="189.2" width="4.5" height="0.8" fill="#6a6a6a"/><text transform="translate(8.7 181.7) rotate(-90)" font-size="6.2" font-family="Liberation Sans" fill="#555" text-anchor="middle">10</text><rect x="4.3" y="205.1" width="4.5" height="0.8" fill="#6a6a6a"/><text transform="translate(8.7 197.5) rotate(-90)" font-size="6.2" font-family="Liberation Sans" fill="#555" text-anchor="middle">11</text><rect x="4.3" y="220.9" width="4.5" height="0.8" fill="#6a6a6a"/><text transform="translate(8.7 213.4) rotate(-90)" font-size="6.2" font-family="Liberation Sans" fill="#555" text-anchor="middle">12</text><rect x="4.3" y="236.8" width="4.5" height="0.8" fill="#6a6a6a"/><text transform="translate(8.7 229.2) rotate(-90)" font-size="6.2" font-family="Liberation Sans" fill="#555" text-anchor="middle">13</text><rect x="4.3" y="252.6" width="4.5" height="0.8" fill="#6a6a6a"/><text transform="translate(8.7 245.1) rotate(-90)" font-size="6.2" font-family="Liberation Sans" fill="#555" text-anchor="middle">14</text><rect x="4.3" y="268.5" width="4.5" height="0.8" fill="#6a6a6a"/><text transform="translate(8.7 260.9) rotate(-90)" font-size="6.2" font-family="Liberation Sans" fill="#555" text-anchor="middle">15</text><rect x="4.3" y="284.3" width="4.5" height="0.8" fill="#6a6a6a"/><text transform="translate(8.7 276.8) rotate(-90)" font-size="6.2" font-family="Liberation Sans" fill="#555" text-anchor="middle">16</text><rect x="4.3" y="300.2" width="4.5" height="0.8" fill="#6a6a6a"/><text transform="translate(8.7 292.6) rotate(-90)" font-size="6.2" font-family="Liberation Sans" fill="#555" text-anchor="middle">17</text><rect x="4.3" y="316.0" width="4.5" height="0.8" fill="#6a6a6a"/><text transform="translate(8.7 308.5) rotate(-90)" font-size="6.2" font-family="Liberation Sans" fill="#555" text-anchor="middle">18</text><rect x="4.3" y="331.9" width="4.5" height="0.8" fill="#6a6a6a"/><text transform="translate(8.7 324.3) rotate(-90)" font-size="6.2" font-family="Liberation Sans" fill="#555" text-anchor="middle">19</text><rect x="4.3" y="347.7" width="4.5" height="0.8" fill="#6a6a6a"/><text transform="translate(8.7 340.2) rotate(-90)" font-size="6.2" font-family="Liberation Sans" fill="#555" text-anchor="middle">20</text><rect x="4.3" y="363.6" width="4.5" height="0.8" fill="#6a6a6a"/><text transform="translate(8.7 356.0) rotate(-90)" font-size="6.2" font-family="Liberation Sans" fill="#555" text-anchor="middle">21</text></svg>
<div class="a" style="left:321.8px;top:122px;width:604.2px;height:12.8px;background:#c6c6c6"></div>
<div class="a" style="left:374.8px;top:122px;width:496.2px;height:12.8px;background:#fff"></div>
<svg class="a" style="left:320px;top:120px" width="608" height="16"><rect x="10.5" y="6.8" width="0.8" height="4.4" fill="#6a6a6a"/><rect x="20.7" y="6.8" width="0.8" height="4.4" fill="#6a6a6a"/><text x="16.0" y="11.2" font-size="6.3" font-family="Liberation Sans" fill="#3a3a3a" text-anchor="middle">4</text><rect x="30.8" y="6.8" width="0.8" height="4.4" fill="#6a6a6a"/><rect x="41.0" y="6.8" width="0.8" height="4.4" fill="#6a6a6a"/><text x="36.3" y="11.2" font-size="6.3" font-family="Liberation Sans" fill="#3a3a3a" text-anchor="middle">2</text><rect x="51.1" y="6.8" width="0.8" height="4.4" fill="#6a6a6a"/><rect x="61.3" y="6.8" width="0.8" height="4.4" fill="#6a6a6a"/><rect x="71.4" y="6.8" width="0.8" height="4.4" fill="#6a6a6a"/><rect x="81.6" y="6.8" width="0.8" height="4.4" fill="#6a6a6a"/><text x="76.9" y="11.2" font-size="6.3" font-family="Liberation Sans" fill="#3a3a3a" text-anchor="middle">2</text><rect x="91.7" y="6.8" width="0.8" height="4.4" fill="#6a6a6a"/><rect x="101.9" y="6.8" width="0.8" height="4.4" fill="#6a6a6a"/><text x="97.2" y="11.2" font-size="6.3" font-family="Liberation Sans" fill="#3a3a3a" text-anchor="middle">4</text><rect x="112.0" y="6.8" width="0.8" height="4.4" fill="#6a6a6a"/><rect x="122.2" y="6.8" width="0.8" height="4.4" fill="#6a6a6a"/><text x="117.5" y="11.2" font-size="6.3" font-family="Liberation Sans" fill="#3a3a3a" text-anchor="middle">6</text><rect x="132.3" y="6.8" width="0.8" height="4.4" fill="#6a6a6a"/><rect x="142.5" y="6.8" width="0.8" height="4.4" fill="#6a6a6a"/><text x="137.8" y="11.2" font-size="6.3" font-family="Liberation Sans" fill="#3a3a3a" text-anchor="middle">8</text><rect x="152.6" y="6.8" width="0.8" height="4.4" fill="#6a6a6a"/><rect x="162.8" y="6.8" width="0.8" height="4.4" fill="#6a6a6a"/><text x="158.1" y="11.2" font-size="6.3" font-family="Liberation Sans" fill="#3a3a3a" text-anchor="middle">10</text><rect x="172.9" y="6.8" width="0.8" height="4.4" fill="#6a6a6a"/><rect x="183.1" y="6.8" width="0.8" height="4.4" fill="#6a6a6a"/><text x="178.4" y="11.2" font-size="6.3" font-family="Liberation Sans" fill="#3a3a3a" text-anchor="middle">12</text><rect x="193.2" y="6.8" width="0.8" height="4.4" fill="#6a6a6a"/><rect x="203.4" y="6.8" width="0.8" height="4.4" fill="#6a6a6a"/><text x="198.7" y="11.2" font-size="6.3" font-family="Liberation Sans" fill="#3a3a3a" text-anchor="middle">14</text><rect x="213.5" y="6.8" width="0.8" height="4.4" fill="#6a6a6a"/><rect x="223.7" y="6.8" width="0.8" height="4.4" fill="#6a6a6a"/><text x="219.0" y="11.2" font-size="6.3" font-family="Liberation Sans" fill="#3a3a3a" text-anchor="middle">16</text><rect x="233.8" y="6.8" width="0.8" height="4.4" fill="#6a6a6a"/><rect x="244.0" y="6.8" width="0.8" height="4.4" fill="#6a6a6a"/><text x="239.3" y="11.2" font-size="6.3" font-family="Liberation Sans" fill="#3a3a3a" text-anchor="middle">18</text><rect x="254.1" y="6.8" width="0.8" height="4.4" fill="#6a6a6a"/><rect x="264.3" y="6.8" width="0.8" height="4.4" fill="#6a6a6a"/><text x="259.6" y="11.2" font-size="6.3" font-family="Liberation Sans" fill="#3a3a3a" text-anchor="middle">20</text><rect x="274.4" y="6.8" width="0.8" height="4.4" fill="#6a6a6a"/><rect x="284.6" y="6.8" width="0.8" height="4.4" fill="#6a6a6a"/><text x="279.9" y="11.2" font-size="6.3" font-family="Liberation Sans" fill="#3a3a3a" text-anchor="middle">22</text><rect x="294.7" y="6.8" width="0.8" height="4.4" fill="#6a6a6a"/><rect x="304.9" y="6.8" width="0.8" height="4.4" fill="#6a6a6a"/><text x="300.2" y="11.2" font-size="6.3" font-family="Liberation Sans" fill="#3a3a3a" text-anchor="middle">24</text><rect x="315.0" y="6.8" width="0.8" height="4.4" fill="#6a6a6a"/><rect x="325.2" y="6.8" width="0.8" height="4.4" fill="#6a6a6a"/><text x="320.5" y="11.2" font-size="6.3" font-family="Liberation Sans" fill="#3a3a3a" text-anchor="middle">26</text><rect x="335.3" y="6.8" width="0.8" height="4.4" fill="#6a6a6a"/><rect x="345.5" y="6.8" width="0.8" height="4.4" fill="#6a6a6a"/><text x="340.8" y="11.2" font-size="6.3" font-family="Liberation Sans" fill="#3a3a3a" text-anchor="middle">28</text><rect x="355.6" y="6.8" width="0.8" height="4.4" fill="#6a6a6a"/><rect x="365.8" y="6.8" width="0.8" height="4.4" fill="#6a6a6a"/><text x="361.1" y="11.2" font-size="6.3" font-family="Liberation Sans" fill="#3a3a3a" text-anchor="middle">30</text><rect x="375.9" y="6.8" width="0.8" height="4.4" fill="#6a6a6a"/><rect x="386.1" y="6.8" width="0.8" height="4.4" fill="#6a6a6a"/><text x="381.4" y="11.2" font-size="6.3" font-family="Liberation Sans" fill="#3a3a3a" text-anchor="middle">32</text><rect x="396.2" y="6.8" width="0.8" height="4.4" fill="#6a6a6a"/><rect x="406.4" y="6.8" width="0.8" height="4.4" fill="#6a6a6a"/><text x="401.7" y="11.2" font-size="6.3" font-family="Liberation Sans" fill="#3a3a3a" text-anchor="middle">34</text><rect x="416.5" y="6.8" width="0.8" height="4.4" fill="#6a6a6a"/><rect x="426.7" y="6.8" width="0.8" height="4.4" fill="#6a6a6a"/><text x="422.0" y="11.2" font-size="6.3" font-family="Liberation Sans" fill="#3a3a3a" text-anchor="middle">36</text><rect x="436.8" y="6.8" width="0.8" height="4.4" fill="#6a6a6a"/><rect x="447.0" y="6.8" width="0.8" height="4.4" fill="#6a6a6a"/><text x="442.3" y="11.2" font-size="6.3" font-family="Liberation Sans" fill="#3a3a3a" text-anchor="middle">38</text><rect x="457.1" y="6.8" width="0.8" height="4.4" fill="#6a6a6a"/><rect x="467.3" y="6.8" width="0.8" height="4.4" fill="#6a6a6a"/><text x="462.6" y="11.2" font-size="6.3" font-family="Liberation Sans" fill="#3a3a3a" text-anchor="middle">40</text><rect x="477.4" y="6.8" width="0.8" height="4.4" fill="#6a6a6a"/><rect x="487.6" y="6.8" width="0.8" height="4.4" fill="#6a6a6a"/><text x="482.9" y="11.2" font-size="6.3" font-family="Liberation Sans" fill="#3a3a3a" text-anchor="middle">42</text><rect x="497.7" y="6.8" width="0.8" height="4.4" fill="#6a6a6a"/><rect x="507.9" y="6.8" width="0.8" height="4.4" fill="#6a6a6a"/><text x="503.2" y="11.2" font-size="6.3" font-family="Liberation Sans" fill="#3a3a3a" text-anchor="middle">44</text><rect x="518.0" y="6.8" width="0.8" height="4.4" fill="#6a6a6a"/><rect x="528.2" y="6.8" width="0.8" height="4.4" fill="#6a6a6a"/><text x="523.5" y="11.2" font-size="6.3" font-family="Liberation Sans" fill="#3a3a3a" text-anchor="middle">46</text><rect x="538.3" y="6.8" width="0.8" height="4.4" fill="#6a6a6a"/><rect x="548.5" y="6.8" width="0.8" height="4.4" fill="#6a6a6a"/><text x="543.8" y="11.2" font-size="6.3" font-family="Liberation Sans" fill="#3a3a3a" text-anchor="middle">48</text><rect x="558.6" y="6.8" width="0.8" height="4.4" fill="#6a6a6a"/><rect x="568.8" y="6.8" width="0.8" height="4.4" fill="#6a6a6a"/><text x="564.1" y="11.2" font-size="6.3" font-family="Liberation Sans" fill="#3a3a3a" text-anchor="middle">50</text><rect x="578.9" y="6.8" width="0.8" height="4.4" fill="#6a6a6a"/><rect x="589.1" y="6.8" width="0.8" height="4.4" fill="#6a6a6a"/><text x="584.4" y="11.2" font-size="6.3" font-family="Liberation Sans" fill="#3a3a3a" text-anchor="middle">52</text><rect x="599.2" y="6.8" width="0.8" height="4.4" fill="#6a6a6a"/><text x="604.7" y="11.2" font-size="6.3" font-family="Liberation Sans" fill="#3a3a3a" text-anchor="middle">54</text></svg>
<svg class="a" style="left:373px;top:119.5px" width="8" height="20" viewBox="0 0 8 20"><path d="M0.5 0.8 H7.3 V2 L3.9 5.8 L0.5 2 Z" fill="#fff" stroke="#8a8a8a" stroke-width="0.7"/><path d="M3.9 6.8 L7.3 10.5 V19 H0.5 V10.5 Z" fill="#fff" stroke="#8a8a8a" stroke-width="0.7"/><path d="M0.5 13.5 H7.3" stroke="#8a8a8a" stroke-width="0.6"/></svg>
<svg class="a" style="left:868px;top:130px" width="7" height="7" viewBox="0 0 7 7"><path d="M3.5 0.5 L6.5 3.3 V6.5 H0.5 V3.3 Z" fill="#fff" stroke="#8a8a8a" stroke-width="0.7"/></svg>
<div class="a" style="left:323px;top:139px;width:603px;height:361px;background:#fff"></div>
<div class="a" style="left:322px;top:139px;width:1px;height:361px;background:#d3d3d3"></div>
<div class="a" style="left:926px;top:139px;width:1px;height:361px;background:#d3d3d3"></div>
<div class="a" style="left:376.5px;top:139px;width:1px;height:19.5px;background:#bdbdbd"></div>
<div class="a" style="left:359px;top:158px;width:18.5px;height:1px;background:#bdbdbd"></div>
<div class="a" style="left:872px;top:139px;width:1px;height:19.5px;background:#bdbdbd"></div>
<div class="a" style="left:872px;top:158px;width:18.5px;height:1px;background:#bdbdbd"></div>
<svg class="a" style="left:789px;top:139px" width="18" height="9" viewBox="0 0 18 9"><path d="M0.5 0 H17.5 V3 Q17.5 4.5 15.5 4.5 H11 Q9 4.5 9 3.5 Q9 4.5 7 4.5 H2.5 Q0.5 4.5 0.5 3 Z" fill="#e58592"/><rect x="1.5" y="6.3" width="15" height="1.3" fill="#f2bcc3"/></svg>
<div class="a" style="left:817.5px;top:139px;width:3px;height:6px;background:#c9c9c9"></div>
<div class="a" style="left:827px;top:139px;width:44px;height:2px;background:#dcdcdc"></div>
<div class="a" style="left:827px;top:141px;font-size:5.6px;line-height:6px;color:#bdbdbd;font-weight:bold;letter-spacing:0.55px">HTEACHER.NET</div>
<svg class="a" style="left:872.5px;top:139.0px" width="8" height="8" viewBox="0 0 8 8"><path d="M7 0.8 V5 H1 M3 3 L1 5 L3 7" fill="none" stroke="#555" stroke-width="0.8"/></svg>
<div class="a" style="left:549px;top:159px;width:1px;height:31px;background:#999"></div>
<div class="a" style="left:549.5px;top:162.5px;font-family:'Liberation Serif',serif;color:#000;font-size:20px;line-height:22px;font-weight:bold;-webkit-text-stroke:0.5px #000">第二篇<span style="font-size:10px">·</span> 小小少年</div>
<svg class="a" style="left:701.0px;top:168.0px" width="12" height="12" viewBox="0 0 8 8"><path d="M7 0.8 V5 H1 M3 3 L1 5 L3 7" fill="none" stroke="#999" stroke-width="0.8"/></svg>
<div class="a" style="left:540px;top:203px;font-family:'Liberation Serif',serif;color:#000;font-size:14.1px;line-height:16px;color:#111">中小学教师资格考试面试备课纸</div>
<svg class="a" style="left:738.5px;top:206.0px" width="9" height="9" viewBox="0 0 8 8"><path d="M7 0.8 V5 H1 M3 3 L1 5 L3 7" fill="none" stroke="#999" stroke-width="0.8"/></svg>
<div class="a" style="left:399.5px;top:236px;font-family:'Liberation Serif',serif;color:#000;font-size:10.5px;line-height:12px;font-weight:500;-webkit-text-stroke:0.25px #000">准考证号：</div>
<div class="a" style="left:452.5px;top:236px;font-family:'Liberation Serif',serif;color:#000;font-size:10.5px;line-height:12px;color:#222">13111623508921</div>
<div class="a" style="left:527px;top:236px;font-family:'Liberation Serif',serif;color:#000;font-size:10.5px;line-height:12px;color:#aaa;letter-spacing:2.2px">···</div>
<div class="a" style="left:542.5px;top:236px;font-family:'Liberation Serif',serif;color:#000;font-size:10.5px;line-height:12px;font-weight:500;-webkit-text-stroke:0.25px #000">姓名：</div>
<div class="a" style="left:575px;top:236px;font-family:'Liberation Serif',serif;color:#000;font-size:10.5px;line-height:12px;color:#222;transform:scaleX(0.72);transform-origin:0 0">XXX</div>
<div class="a" style="left:592px;top:236px;font-family:'Liberation Serif',serif;color:#000;font-size:10.5px;line-height:12px;color:#aaa;letter-spacing:2.2px">···</div>
<div class="a" style="left:607px;top:236px;font-family:'Liberation Serif',serif;color:#000;font-size:10.5px;line-height:12px;font-weight:500;-webkit-text-stroke:0.25px #000">所在考场：</div>
<div class="a" style="left:660.5px;top:236px;font-family:'Liberation Serif',serif;color:#000;font-size:10.5px;line-height:12px;color:#222">10</div>
<svg class="a" style="left:671.0px;top:238.0px" width="7" height="7" viewBox="0 0 8 8"><path d="M7 0.8 V5 H1 M3 3 L1 5 L3 7" fill="none" stroke="#aaa" stroke-width="0.8"/></svg>
<div class="a" style="left:377.8px;top:254.2px;width:492.5px;height:2px;background:#111"></div>
<div class="a" style="left:377.8px;top:257.3px;width:492.5px;height:1.5px;background:#666"></div>
<div class="a" style="left:377.8px;top:263px;font-family:'Liberation Serif',serif;color:#000;font-size:10px;line-height:12px;color:#333">报考科目<span style="display:inline-block;width:5.3px;text-align:center">:</span>音乐<span style="display:inline-block;width:5.3px;text-align:right">(</span>小学<span style="display:inline-block;width:5.3px;text-align:left">)</span></div>
<svg class="a" style="left:474px;top:266px" width="242" height="4"><circle cx="1.5" cy="2.6" r="0.55" fill="#888"/><circle cx="7.3" cy="2.6" r="0.55" fill="#888"/><circle cx="13.0" cy="2.6" r="0.55" fill="#888"/><circle cx="18.8" cy="2.6" r="0.55" fill="#888"/><circle cx="24.6" cy="2.6" r="0.55" fill="#888"/><circle cx="30.3" cy="2.6" r="0.55" fill="#888"/><circle cx="36.1" cy="2.6" r="0.55" fill="#888"/><circle cx="41.9" cy="2.6" r="0.55" fill="#888"/><circle cx="47.7" cy="2.6" r="0.55" fill="#888"/><circle cx="53.4" cy="2.6" r="0.55" fill="#888"/><circle cx="59.2" cy="2.6" r="0.55" fill="#888"/><circle cx="65.0" cy="2.6" r="0.55" fill="#888"/><circle cx="70.7" cy="2.6" r="0.55" fill="#888"/><circle cx="76.5" cy="2.6" r="0.55" fill="#888"/><circle cx="82.3" cy="2.6" r="0.55" fill="#888"/><circle cx="88.0" cy="2.6" r="0.55" fill="#888"/><circle cx="93.8" cy="2.6" r="0.55" fill="#888"/><circle cx="99.6" cy="2.6" r="0.55" fill="#888"/><circle cx="105.4" cy="2.6" r="0.55" fill="#888"/><circle cx="111.1" cy="2.6" r="0.55" fill="#888"/><circle cx="116.9" cy="2.6" r="0.55" fill="#888"/><circle cx="122.7" cy="2.6" r="0.55" fill="#888"/><circle cx="128.4" cy="2.6" r="0.55" fill="#888"/><circle cx="134.2" cy="2.6" r="0.55" fill="#888"/><circle cx="140.0" cy="2.6" r="0.55" fill="#888"/><circle cx="145.7" cy="2.6" r="0.55" fill="#888"/><circle cx="151.5" cy="2.6" r="0.55" fill="#888"/><circle cx="157.3" cy="2.6" r="0.55" fill="#888"/><circle cx="163.1" cy="2.6" r="0.55" fill="#888"/><circle cx="168.8" cy="2.6" r="0.55" fill="#888"/><circle cx="174.6" cy="2.6" r="0.55" fill="#888"/><circle cx="180.4" cy="2.6" r="0.55" fill="#888"/><circle cx="186.1" cy="2.6" r="0.55" fill="#888"/><circle cx="191.9" cy="2.6" r="0.55" fill="#888"/><circle cx="197.7" cy="2.6" r="0.55" fill="#888"/><circle cx="203.4" cy="2.6" r="0.55" fill="#888"/><circle cx="209.2" cy="2.6" r="0.55" fill="#888"/><circle cx="215.0" cy="2.6" r="0.55" fill="#888"/><circle cx="220.8" cy="2.6" r="0.55" fill="#888"/><circle cx="226.5" cy="2.6" r="0.55" fill="#888"/><circle cx="232.3" cy="2.6" r="0.55" fill="#888"/><circle cx="238.1" cy="2.6" r="0.55" fill="#888"/></svg>
<div class="a" style="left:718px;top:263px;font-family:'Liberation Serif',serif;color:#000;font-size:10px;line-height:12px;color:#222">抽题时间<span style="display:inline-block;width:5px;text-align:center;font-weight:bold">:</span>2023 年 1 月 7 日 10:07:06</div>
<svg class="a" style="left:873.5px;top:265.0px" width="7" height="7" viewBox="0 0 8 8"><path d="M7 0.8 V5 H1 M3 3 L1 5 L3 7" fill="none" stroke="#aaa" stroke-width="0.8"/></svg>
<div class="a" style="left:399.5px;top:284.6px;font-family:'Liberation Serif',serif;color:#000;font-size:10.5px;line-height:12px;color:#333">1. 题目：歌唱教学试讲</div>
<div class="a" style="left:399.5px;top:302.1px;font-family:'Liberation Serif',serif;color:#000;font-size:10.5px;line-height:12px;color:#333">2. 内容：《小小少年》</div>
<div class="a" style="left:399.5px;top:318.9px;font-family:'Liberation Serif',serif;color:#000;font-size:10.5px;line-height:12px;color:#333">3. 基本要求：根据指定内容进行片段教学设计与试讲（约 10 分钟）</div>
<div class="a" style="left:399.5px;top:336.7px;font-family:'Liberation Serif',serif;color:#000;font-size:10.5px;line-height:12px;color:#333">（1）展示唱歌课教学过程；</div>
<div class="a" style="left:399.5px;top:353.0px;font-family:'Liberation Serif',serif;color:#000;font-size:10.5px;line-height:12px;color:#333">（2）依据谱例边弹边唱旋律；</div>
<div class="a" style="left:399.5px;top:371.0px;font-family:'Liberation Serif',serif;color:#000;font-size:10.5px;line-height:12px;color:#333">（3）讲解附点音符和弱起小节；</div>
<div class="a" style="left:399.5px;top:388.0px;font-family:'Liberation Serif',serif;color:#000;font-size:10.5px;line-height:12px;color:#333">（4）适当展示板书。</div>
<svg class="a" style="left:509.5px;top:287.3px" width="7" height="7" viewBox="0 0 8 8"><path d="M7 0.8 V5 H1 M3 3 L1 5 L3 7" fill="none" stroke="#aaa" stroke-width="0.8"/></svg>
<svg class="a" style="left:504.5px;top:304.8px" width="7" height="7" viewBox="0 0 8 8"><path d="M7 0.8 V5 H1 M3 3 L1 5 L3 7" fill="none" stroke="#aaa" stroke-width="0.8"/></svg>
<svg class="a" style="left:713.5px;top:321.6px" width="7" height="7" viewBox="0 0 8 8"><path d="M7 0.8 V5 H1 M3 3 L1 5 L3 7" fill="none" stroke="#aaa" stroke-width="0.8"/></svg>
<svg class="a" style="left:532.5px;top:339.4px" width="7" height="7" viewBox="0 0 8 8"><path d="M7 0.8 V5 H1 M3 3 L1 5 L3 7" fill="none" stroke="#aaa" stroke-width="0.8"/></svg>
<svg class="a" style="left:543.5px;top:355.7px" width="7" height="7" viewBox="0 0 8 8"><path d="M7 0.8 V5 H1 M3 3 L1 5 L3 7" fill="none" stroke="#aaa" stroke-width="0.8"/></svg>
<svg class="a" style="left:554.5px;top:373.7px" width="7" height="7" viewBox="0 0 8 8"><path d="M7 0.8 V5 H1 M3 3 L1 5 L3 7" fill="none" stroke="#aaa" stroke-width="0.8"/></svg>
<svg class="a" style="left:501.0px;top:390.7px" width="7" height="7" viewBox="0 0 8 8"><path d="M7 0.8 V5 H1 M3 3 L1 5 L3 7" fill="none" stroke="#aaa" stroke-width="0.8"/></svg>
<div class="a" style="left:597px;top:409.5px;font-family:'Liberation Serif',serif;color:#000;font-size:13px;line-height:14px;font-weight:bold;-webkit-text-stroke:0.3px #000">小小少年</div>
<svg class="a" style="left:651.0px;top:412.0px" width="7" height="7" viewBox="0 0 8 8"><path d="M7 0.8 V5 H1 M3 3 L1 5 L3 7" fill="none" stroke="#aaa" stroke-width="0.8"/></svg>
<div class="a" style="left:502px;top:435.5px;font-size:10.5px;line-height:12px;font-weight:bold;color:#111">中速</div>
<svg class="a" style="left:455px;top:440px" width="380" height="60" viewBox="455 440 380 60"><line x1="461.8" x2="827.5" y1="454.5" y2="454.5" stroke="#333" stroke-width="0.9"/><line x1="461.8" x2="827.5" y1="458.7" y2="458.7" stroke="#333" stroke-width="0.9"/><line x1="461.8" x2="827.5" y1="462.9" y2="462.9" stroke="#333" stroke-width="0.9"/><line x1="461.8" x2="827.5" y1="467.1" y2="467.1" stroke="#333" stroke-width="0.9"/><line x1="461.8" x2="827.5" y1="471.3" y2="471.3" stroke="#333" stroke-width="0.9"/><line x1="542.0" x2="542.0" y1="454.5" y2="471.3" stroke="#222" stroke-width="0.8"/><line x1="612.3" x2="612.3" y1="454.5" y2="471.3" stroke="#222" stroke-width="0.8"/><line x1="683.0" x2="683.0" y1="454.5" y2="471.3" stroke="#222" stroke-width="0.8"/><line x1="764.4" x2="764.4" y1="454.5" y2="471.3" stroke="#222" stroke-width="0.8"/><line x1="827.0" x2="827.0" y1="454.5" y2="471.3" stroke="#222" stroke-width="0.8"/><path d="M472.6 468.6 C468.6 469.2 468.2 463.6 472 463.3 C476.2 463 476.6 470.6 471.6 471 C466.2 471.4 465.6 463.8 470.4 459.8 L474 456.2 C477.2 452.6 476.6 447.8 474.6 448 C472.6 448.2 471.6 452.4 472.2 457.6 L474.2 476.2 C474.6 479.4 471.6 480.2 469.8 479" fill="none" stroke="#111" stroke-width="1.7"/><circle cx="469.6" cy="477.2" r="2.1" fill="#111"/><path d="M482.8 453.9 V464.9" stroke="#222" stroke-width="0.8"/><path d="M482.8 462.4 C485.0 460.3 487.0 462.3 482.8 464.9" fill="none" stroke="#222" stroke-width="1.4"/><path d="M487.3 447.8 V458.8" stroke="#222" stroke-width="0.8"/><path d="M487.3 456.3 C489.5 454.2 491.5 456.2 487.3 458.8" fill="none" stroke="#222" stroke-width="1.4"/><path d="M491.6 456.1 V467.1" stroke="#222" stroke-width="0.8"/><path d="M491.6 464.6 C493.8 462.5 495.8 464.5 491.6 467.1" fill="none" stroke="#222" stroke-width="1.4"/><text x="501.8" y="463" font-family="Liberation Sans" font-weight="bold" font-size="11.5" fill="#111" stroke="#111" stroke-width="0.5" transform="translate(501.8 0) scale(0.8 1) translate(-501.8 0)">4</text><text x="501.8" y="471.5" font-family="Liberation Sans" font-weight="bold" font-size="11.5" fill="#111" stroke="#111" stroke-width="0.5" transform="translate(501.8 0) scale(0.8 1) translate(-501.8 0)">4</text><ellipse cx="519.5" cy="462.9" rx="2.9" ry="2.05" transform="rotate(-25 519.5 462.9)" fill="#111"/><line x1="517.1" x2="517.1" y1="463.4" y2="477.5" stroke="#111" stroke-width="0.8"/><circle cx="524.5" cy="461.7" r="0.75" fill="#111"/><ellipse cx="533.0" cy="460.8" rx="2.9" ry="2.05" transform="rotate(-25 533.0 460.8)" fill="#111"/><line x1="530.6" x2="530.6" y1="461.3" y2="475.5" stroke="#111" stroke-width="0.8"/><path d="M517.1 476.6 L530.6 474.6 L530.6 476.6 L517.1 478.6 Z" fill="#111"/><path d="M526.6 473.1 L530.6 472.6 L530.6 473.8 L526.6 474.3 Z" fill="#111"/><ellipse cx="551.5" cy="460.8" rx="2.9" ry="2.05" transform="rotate(-25 551.5 460.8)" fill="#111"/><line x1="549.1" x2="549.1" y1="461.3" y2="476.5" stroke="#111" stroke-width="0.8"/><ellipse cx="566.0" cy="462.9" rx="2.6" ry="1.75" transform="rotate(-25 566.0 462.9)" fill="none" stroke="#111" stroke-width="1.1"/><line x1="563.6" x2="563.6" y1="463.4" y2="478.0" stroke="#111" stroke-width="0.8"/><ellipse cx="590.0" cy="467.1" rx="2.9" ry="2.05" transform="rotate(-25 590.0 467.1)" fill="#111"/><line x1="592.4" x2="592.4" y1="466.6" y2="451.0" stroke="#111" stroke-width="0.8"/><circle cx="595.0" cy="465.9" r="0.75" fill="#111"/><ellipse cx="604.0" cy="465.0" rx="2.9" ry="2.05" transform="rotate(-25 604.0 465.0)" fill="#111"/><line x1="606.4" x2="606.4" y1="464.5" y2="451.0" stroke="#111" stroke-width="0.8"/><path d="M592.4 450.5 L606.4 450.5 L606.4 452.5 L592.4 452.5 Z" fill="#111"/><path d="M602.9 453.3 L606.4 453.3 L606.4 454.5 L602.9 454.5 Z" fill="#111"/><ellipse cx="621.0" cy="467.1" rx="2.9" ry="2.05" transform="rotate(-25 621.0 467.1)" fill="#111"/><line x1="623.4" x2="623.4" y1="466.6" y2="452.4" stroke="#111" stroke-width="0.8"/><ellipse cx="637.0" cy="469.2" rx="2.6" ry="1.75" transform="rotate(-25 637.0 469.2)" fill="none" stroke="#111" stroke-width="1.1"/><line x1="639.4" x2="639.4" y1="468.7" y2="452.4" stroke="#111" stroke-width="0.8"/><ellipse cx="660.0" cy="469.2" rx="2.9" ry="2.05" transform="rotate(-25 660.0 469.2)" fill="#111"/><line x1="662.4" x2="662.4" y1="468.7" y2="452.0" stroke="#111" stroke-width="0.8"/><ellipse cx="673.0" cy="467.1" rx="2.9" ry="2.05" transform="rotate(-25 673.0 467.1)" fill="#111"/><line x1="675.4" x2="675.4" y1="466.6" y2="452.0" stroke="#111" stroke-width="0.8"/><path d="M662.4 451.8 L675.4 451.2 L675.4 453.2 L662.4 453.8 Z" fill="#111"/><ellipse cx="692.0" cy="465.0" rx="2.6" ry="1.75" transform="rotate(-25 692.0 465.0)" fill="none" stroke="#111" stroke-width="1.1"/><line x1="694.4" x2="694.4" y1="464.5" y2="450.5" stroke="#111" stroke-width="0.8"/><ellipse cx="716.5" cy="465.0" rx="2.9" ry="2.05" transform="rotate(-25 716.5 465.0)" fill="#111"/><line x1="718.9" x2="718.9" y1="464.5" y2="451.0" stroke="#111" stroke-width="0.8"/><ellipse cx="727.5" cy="469.2" rx="2.9" ry="2.05" transform="rotate(-25 727.5 469.2)" fill="#111"/><line x1="729.9" x2="729.9" y1="468.7" y2="451.5" stroke="#111" stroke-width="0.8"/><path d="M718.9 450.5 L729.9 451.0 L729.9 453.0 L718.9 452.5 Z" fill="#111"/><path d="M693 469 Q704.5 474.5 715.5 469" fill="none" stroke="#111" stroke-width="0.8"/><ellipse cx="740.0" cy="458.7" rx="2.9" ry="2.05" transform="rotate(-25 740.0 458.7)" fill="#111"/><line x1="737.6" x2="737.6" y1="459.2" y2="474.5" stroke="#111" stroke-width="0.8"/><circle cx="745.0" cy="457.5" r="0.75" fill="#111"/><ellipse cx="752.0" cy="460.8" rx="2.9" ry="2.05" transform="rotate(-25 752.0 460.8)" fill="#111"/><line x1="749.6" x2="749.6" y1="461.3" y2="475.5" stroke="#111" stroke-width="0.8"/><path d="M737.6 473.5 L749.6 474.5 L749.6 476.5 L737.6 475.5 Z" fill="#111"/><path d="M746.1 472.6 L749.6 472.8 L749.6 474.0 L746.1 473.8 Z" fill="#111"/><ellipse cx="773.0" cy="462.9" rx="2.6" ry="1.75" transform="rotate(-25 773.0 462.9)" fill="none" stroke="#111" stroke-width="1.1"/><line x1="770.6" x2="770.6" y1="463.4" y2="478.3" stroke="#111" stroke-width="0.8"/><circle cx="778.5" cy="461.7" r="0.75" fill="#111"/><ellipse cx="805.0" cy="462.9" rx="2.9" ry="2.05" transform="rotate(-25 805.0 462.9)" fill="#111"/><line x1="802.6" x2="802.6" y1="463.4" y2="476.5" stroke="#111" stroke-width="0.8"/><circle cx="810.0" cy="461.7" r="0.75" fill="#111"/><ellipse cx="818.0" cy="460.8" rx="2.9" ry="2.05" transform="rotate(-25 818.0 460.8)" fill="#111"/><line x1="815.6" x2="815.6" y1="461.3" y2="476.0" stroke="#111" stroke-width="0.8"/><path d="M802.6 475.5 L815.6 474.8 L815.6 476.8 L802.6 477.5 Z" fill="#111"/><path d="M812.1 473.4 L815.6 473.3 L815.6 474.5 L812.1 474.6 Z" fill="#111"/></svg>
<div class="a" style="left:506.5px;top:486px;font-family:'Liberation Serif',serif;font-size:10px;line-height:12px;font-style:italic;color:#111">1.</div>
<div class="a" style="left:515.4px;top:485.5px;font-family:'Liberation Serif',serif;font-size:10.5px;line-height:12px;color:#111">小</div>
<div class="a" style="left:527.2px;top:485.5px;font-family:'Liberation Serif',serif;font-size:10.5px;line-height:12px;color:#111">小</div>
<div class="a" style="left:545.8px;top:485.5px;font-family:'Liberation Serif',serif;font-size:10.5px;line-height:12px;color:#111">少</div>
<div class="a" style="left:559.3px;top:485.5px;font-family:'Liberation Serif',serif;font-size:10.5px;line-height:12px;color:#111">年</div>
<div class="a" style="left:570.0px;top:485.5px;font-family:'Liberation Serif',serif;font-size:10.5px;line-height:12px;color:#111">，</div>
<div class="a" style="left:583.8px;top:485.5px;font-family:'Liberation Serif',serif;font-size:10.5px;line-height:12px;color:#111">很</div>
<div class="a" style="left:596.5px;top:485.5px;font-family:'Liberation Serif',serif;font-size:10.5px;line-height:12px;color:#111">少</div>
<div class="a" style="left:615.4px;top:485.5px;font-family:'Liberation Serif',serif;font-size:10.5px;line-height:12px;color:#111">烦</div>
<div class="a" style="left:630.7px;top:485.5px;font-family:'Liberation Serif',serif;font-size:10.5px;line-height:12px;color:#111">恼</div>
<div class="a" style="left:641.0px;top:485.5px;font-family:'Liberation Serif',serif;font-size:10.5px;line-height:12px;color:#111">，</div>
<div class="a" style="left:654.3px;top:485.5px;font-family:'Liberation Serif',serif;font-size:10.5px;line-height:12px;color:#111">眼</div>
<div class="a" style="left:669.5px;top:485.5px;font-family:'Liberation Serif',serif;font-size:10.5px;line-height:12px;color:#111">望</div>
<div class="a" style="left:687.3px;top:485.5px;font-family:'Liberation Serif',serif;font-size:10.5px;line-height:12px;color:#111">四</div>
<div class="a" style="left:721.5px;top:485.5px;font-family:'Liberation Serif',serif;font-size:10.5px;line-height:12px;color:#111">周</div>
<div class="a" style="left:736.8px;top:485.5px;font-family:'Liberation Serif',serif;font-size:10.5px;line-height:12px;color:#111">阳</div>
<div class="a" style="left:749.7px;top:485.5px;font-family:'Liberation Serif',serif;font-size:10.5px;line-height:12px;color:#111">光</div>
<div class="a" style="left:766.2px;top:485.5px;font-family:'Liberation Serif',serif;font-size:10.5px;line-height:12px;color:#111">照</div>
<div class="a" style="left:776.5px;top:485.5px;font-family:'Liberation Serif',serif;font-size:10.5px;line-height:12px;color:#111">。</div>
<div class="a" style="left:799.2px;top:485.5px;font-family:'Liberation Serif',serif;font-size:10.5px;line-height:12px;color:#111">小</div>
<div class="a" style="left:812.2px;top:485.5px;font-family:'Liberation Serif',serif;font-size:10.5px;line-height:12px;color:#111">小</div>
</body></html>
